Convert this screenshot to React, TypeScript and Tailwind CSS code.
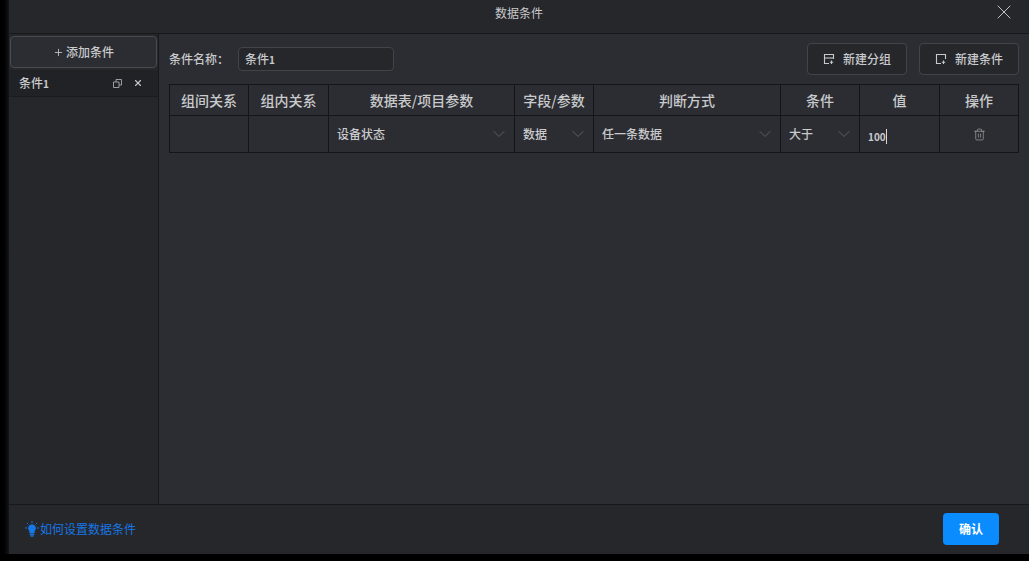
import { ChevronDown, Plus, X, Trash2 } from 'lucide-react';

const font = "font-['Noto_Sans_CJK_SC','Noto_Sans_CJK_JP',sans-serif]";

const columns = [
  { title: '组间关系', width: 'w-[79px]' },
  { title: '组内关系', width: 'w-[80px]' },
  { title: '数据表/项目参数', width: 'w-[186px]' },
  { title: '字段/参数', width: 'w-[79px]' },
  { title: '判断方式', width: 'w-[187px]' },
  { title: '条件', width: 'w-[79px]' },
  { title: '值', width: 'w-[80px]' },
  { title: '操作', width: 'w-[79px]' }
];

const SelectCell = ({ text }: { text: string }) => (
  <div className="flex h-full items-center justify-between pl-2 pr-[5px]">
    <span className="text-[12px] font-medium text-[#c9cacc]">{text}</span>
    <ChevronDown size={20} strokeWidth={0.9} className="text-[#6d6f74]" />
  </div>
);

const GroupIcon = () => (
  <svg width="12" height="12" viewBox="0 0 12 12" fill="none" stroke="#c8c9cb" strokeWidth="1.1">
    <path d="M6 10.5H1.5V1.5H10.5V6" />
    <path d="M1.5 5H10.5" />
    <path d="M8.5 7.5V11M6.8 9.2H10.2" />
  </svg>
);

const AddIcon = () => (
  <svg width="12" height="12" viewBox="0 0 12 12" fill="none" stroke="#c8c9cb" strokeWidth="1.1">
    <path d="M6 10.5H1.5V1.5H10.5V6" />
    <path d="M8.5 7.5V11M6.8 9.2H10.2" />
  </svg>
);

const CopyIcon = () => (
  <svg width="9" height="9" viewBox="0 0 9 9" fill="none" stroke="#a9aaad" strokeWidth="0.9">
    <path d="M3 3V0.5H8.5V6H6" />
    <path d="M0.5 3H6V8.5H0.5Z" />
  </svg>
);

const BulbIcon = () => (
  <svg width="14" height="16" viewBox="0 0 14 16" fill="none" className="shrink-0">
    <path d="M7 3.2a4 4 0 0 1 2.6 7V12.4H4.4V10.2A4 4 0 0 1 7 3.2Z" fill="#1677e6" />
    <path d="M4.8 13.6H9.2M5.6 15.2H8.4" stroke="#1677e6" strokeWidth="1.2" />
    <path d="M7 0V2M2 2L3.2 3.2M12 2L10.8 3.2M0 7H2M12 7H14" stroke="#1677e6" strokeWidth="1" />
  </svg>
);

export default function App() {
  return (
    <div className={`flex h-[561px] w-[1029px] overflow-hidden bg-black ${font}`}>
      <div className="h-[554px] w-[9px] shrink-0 bg-gradient-to-r from-[#000000] to-[#15161a]" />
      <div className="flex h-[554px] min-w-0 flex-1 flex-col bg-[#2c2d32]">
        <header className="relative flex h-[34px] shrink-0 items-center justify-center border-b border-[#17181b] bg-[#26272b] pb-2">
          <span className="text-[12px] text-[#c9cacc]">数据条件</span>
          <button className="absolute right-[13px] top-0 text-[#d4d5d6]">
            <X size={24} strokeWidth={0.9} />
          </button>
        </header>

        <div className="flex min-h-0 flex-1">
          <aside className="w-[150px] shrink-0 border-r border-[#17181b] bg-[#26272b]">
            <button className="mt-[2px] ml-[1px] flex h-[32px] w-[147px] items-center justify-center gap-[2px] rounded-[4px] border border-[#4a4b50] bg-[#2c2d32] text-[12px] font-medium text-[#c9cacc]">
              <Plus size={11} strokeWidth={1.8} />
              添加条件
            </button>
            <div className="mt-[2px] flex h-[27px] items-center justify-between border-b border-[#1b1c1f] bg-[#212226] pl-[10px] pr-[15px]">
              <span className="text-[12px] font-medium text-[#c9cacc]">条件<span className="text-[10px] font-bold">1</span></span>
              <div className="flex items-center gap-[11px]">
                <CopyIcon />
                <X size={10} strokeWidth={2.6} className="text-[#c9cacc]" />
              </div>
            </div>
          </aside>

          <main className="min-w-0 flex-1 pl-[10px] pr-[10px] pt-[9px]">
            <div className="flex h-[32px] items-center">
              <label className="w-[69px] text-[12px] font-medium text-[#c9cacc]">条件名称：</label>
              <div className="flex h-[24px] w-[156px] items-center rounded-[4px] border border-[#43444a] bg-[#26272b] px-[6px] text-[12px] font-medium text-[#c9cacc]">
                条件<span className="text-[10px] font-bold">1</span>
              </div>
              <div className="ml-auto flex gap-[12px]">
                <button className="flex h-[32px] w-[100px] items-center justify-center gap-[8px] rounded-[4px] border border-[#43444a] bg-[#26272b] text-[12px] font-medium text-[#c9cacc]">
                  <GroupIcon />
                  新建分组
                </button>
                <button className="flex h-[32px] w-[100px] items-center justify-center gap-[8px] rounded-[4px] border border-[#43444a] bg-[#26272b] text-[12px] font-medium text-[#c9cacc]">
                  <AddIcon />
                  新建条件
                </button>
              </div>
            </div>

            <table className="mt-[9px] w-[849px] table-fixed border-collapse">
              <thead>
                <tr className="h-[31px]">
                  {columns.map((col) => (
                    <th key={col.title} className={`${col.width} border border-[#141518] p-0 text-[14px] leading-[18px] font-medium text-[#c9cacc]`}>
                      {col.title}
                    </th>
                  ))}
                </tr>
              </thead>
              <tbody>
                <tr className="h-[37px]">
                  <td className="border border-[#141518] p-0" />
                  <td className="border border-[#141518] p-0" />
                  <td className="border border-[#141518] p-0"><SelectCell text="设备状态" /></td>
                  <td className="border border-[#141518] p-0"><SelectCell text="数据" /></td>
                  <td className="border border-[#141518] p-0"><SelectCell text="任一条数据" /></td>
                  <td className="border border-[#141518] p-0"><SelectCell text="大于" /></td>
                  <td className="border border-[#141518] p-0 pl-2">
                    <span className="border-r border-[#d8d9da] text-[10px] font-bold text-[#c9cacc]">100</span>
                  </td>
                  <td className="border border-[#141518] p-0">
                    <div className="flex justify-center">
                      <Trash2 size={13} strokeWidth={1.1} className="text-[#b5b6b8]" />
                    </div>
                  </td>
                </tr>
              </tbody>
            </table>
          </main>
        </div>

        <footer className="flex h-[50px] shrink-0 items-center justify-between border-t border-[#17181b] bg-[#26272b] pb-[1px] pl-[16px] pr-[30px]">
          <div className="flex items-center gap-px text-[12px] text-[#1677e6]">
            <BulbIcon />
            如何设置数据条件
          </div>
          <button className="h-[32px] w-[56px] rounded-[4px] bg-[#0a8cff] text-[12px] font-bold text-white">确认</button>
        </footer>
      </div>
    </div>
  );
}
